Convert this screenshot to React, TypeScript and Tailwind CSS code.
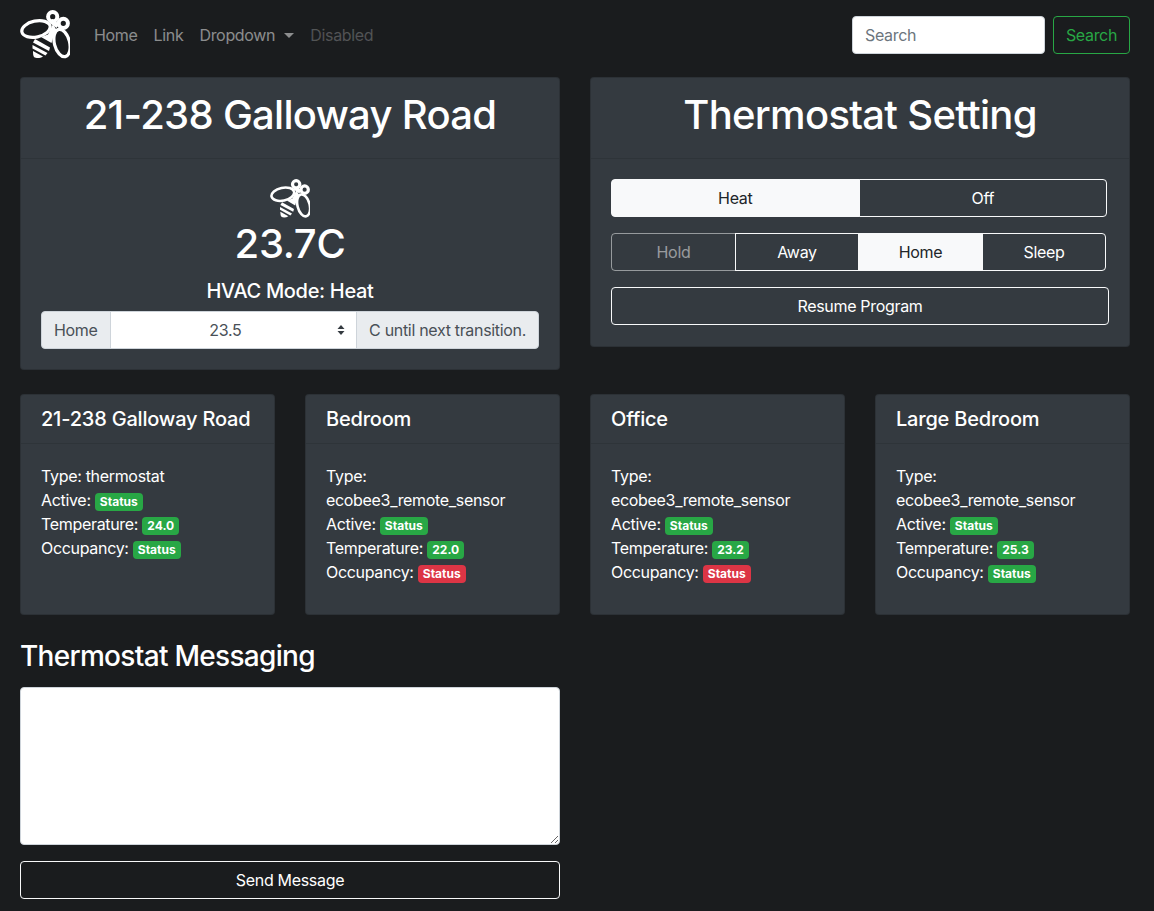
import React from "react";

function Bee({ className }: { className: string }) {
  return (
    <svg viewBox="0 0 50 50" className={className} fill="none" stroke="currentColor">
      <circle cx="32.7" cy="6.7" r="4.6" strokeWidth="4" />
      <circle cx="43.3" cy="13.3" r="4.6" strokeWidth="4" />
      <path d="M31 11 L38 16" strokeWidth="5" />
      <ellipse cx="16" cy="19" rx="14.4" ry="8" strokeWidth="3.2" transform="rotate(-12 16 19)" />
      <ellipse cx="42" cy="33" rx="7.6" ry="14" strokeWidth="3.2" transform="rotate(-14 42 33)" />
      <path d="M21 27 L28 24.5 L33 14 L36.5 20 L33.5 26 L31.5 33 Z" fill="currentColor" stroke="none" />
      <path d="M15 29 L30 37.5 L29 41 L13 32.5 Z" fill="currentColor" stroke="none" />
      <path d="M12.5 35 L27.5 43 L25.5 45.5 L12.5 38.5 Z" fill="currentColor" stroke="none" />
      <path d="M13 41 L23 46.5 C20 48.5 16 48.5 14 47 C13 45.5 13 43 13 41 Z" fill="currentColor" stroke="none" />
    </svg>
  );
}

function Badge({ children, red }: { children: React.ReactNode; red?: boolean }) {
  return (
    <span className={`inline-block rounded-[4px] px-[5px] py-[3px] align-baseline text-[12px] leading-[12px] font-bold tracking-normal text-white ${red ? "bg-[#dc3545]" : "bg-[#28a745]"}`}>
      {children}
    </span>
  );
}

function Sensor({ name, type, temp, active, occ, wrap }: { name: string; type: string; temp: string; active: boolean; occ: boolean; wrap?: boolean }) {
  return (
    <div className="rounded-[4px] border border-black/15 bg-[#343a40]">
      <div className="border-b border-black/10 px-5 py-3 text-[20px] leading-6 font-medium tracking-[-0.01em]">{name}</div>
      <div className="px-5 pt-5 pb-[30px] text-[16px] leading-6">
        <div>Type: {wrap ? <br /> : null}{type}</div>
        <div>Active: <Badge red={!active}>Status</Badge></div>
        <div>Temperature: <Badge>{temp}</Badge></div>
        <div>Occupancy: <Badge red={!occ}>Status</Badge></div>
      </div>
    </div>
  );
}

const seg = "flex h-[38px] items-center justify-center text-[16px]";

export default function App() {
  return (
    <div className="min-h-[911px] bg-[#1a1c1e] pr-6 pl-5 font-['Inter','Liberation_Sans',sans-serif] tracking-[-0.02em] text-white">
      <nav className="flex h-[77px] items-center pb-[7px]">
        <Bee className="h-[50px] w-[50px] text-white" />
        <div className="ml-6 flex items-center gap-4 text-[16px] text-white/50">
          <a>Home</a>
          <a>Link</a>
          <a className="flex items-center">
            Dropdown
            <span className="ml-[9px] border-x-[5px] border-t-[5px] border-x-transparent border-t-white/50" />
          </a>
          <a className="text-white/25">Disabled</a>
        </div>
        <div className="ml-auto flex gap-2">
          <input
            placeholder="Search"
            className="h-[38px] w-[193px] rounded-[4px] border border-[#ced4da] bg-white px-3 text-[16px] text-[#495057] outline-none placeholder:text-[#6c757d]"
          />
          <button className="h-[38px] w-[77px] rounded-[4px] border border-[#28a745] text-[16px] text-[#28a745]">Search</button>
        </div>
      </nav>

      <div className="grid grid-cols-2 items-start gap-x-[30px]">
        <div className="rounded-[4px] border border-black/15 bg-[#343a40]">
          <div className="border-b border-black/10 pt-[13px] pb-[19px] text-center text-[40px] leading-[48px] font-medium tracking-[-0.0175em]">21-238 Galloway Road</div>
          <div className="flex flex-col items-center p-5">
            <Bee className="h-[40px] w-[40px] text-white" />
            <div className="mt-[1px] text-[40px] leading-[48px] font-medium">23.7C</div>
            <div className="mt-[11px] text-[20px] leading-6 font-medium">HVAC Mode: Heat</div>
            <div className="mt-2 flex h-[38px] w-full text-[16px] text-[#495057]">
              <span className="flex items-center rounded-l-[4px] border border-[#ced4da] bg-[#e9ecef] px-3">Home</span>
              <div className="relative -mx-px flex-1">
                <select className="h-full w-full appearance-none border border-[#ced4da] bg-white pr-7 pl-3 [text-align-last:center]">
                  <option>23.5</option>
                </select>
                <svg viewBox="0 0 8 10" className="pointer-events-none absolute top-[14px] right-[12px] h-[10px] w-[8px] fill-[#343a40]">
                  <path d="M4 0 L7.5 4 H0.5 Z M4 10 L7.5 6 H0.5 Z" />
                </svg>
              </div>
              <span className="flex items-center rounded-r-[4px] border border-[#ced4da] bg-[#e9ecef] px-3">C until next transition.</span>
            </div>
          </div>
        </div>

        <div className="rounded-[4px] border border-black/15 bg-[#343a40]">
          <div className="border-b border-black/10 pt-[13px] pb-[19px] text-center text-[40px] leading-[48px] font-medium tracking-[-0.0175em]">Thermostat Setting</div>
          <div className="flex flex-col gap-4 px-5 pt-5 pb-[21px]">
            <div className="flex w-[497px]">
              <button className={`${seg} w-1/2 rounded-l-[4px] border border-[#f8f9fa] bg-[#f8f9fa] text-[#212529]`}>Heat</button>
              <button className={`${seg} -ml-px w-1/2 rounded-r-[4px] border border-[#f8f9fa]`}>Off</button>
            </div>
            <div className="flex w-[495px]">
              <button className={`${seg} w-[125px] rounded-l-[4px] border border-[#f8f9fa]/50 text-white/50`}>Hold</button>
              <button className={`${seg} -ml-px w-[124px] border border-[#f8f9fa]`}>Away</button>
              <button className={`${seg} -ml-px w-[125px] border border-[#f8f9fa] bg-[#f8f9fa] text-[#212529]`}>Home</button>
              <button className={`${seg} -ml-px flex-1 rounded-r-[4px] border border-[#f8f9fa]`}>Sleep</button>
            </div>
            <button className={`${seg} w-full rounded-[4px] border border-[#f8f9fa]`}>Resume Program</button>
          </div>
        </div>
      </div>

      <div className="mt-6 grid grid-cols-4 gap-x-[30px]">
        <Sensor name="21-238 Galloway Road" type="thermostat" temp="24.0" active occ />
        <Sensor name="Bedroom" type="ecobee3_remote_sensor" temp="22.0" active occ={false} wrap />
        <Sensor name="Office" type="ecobee3_remote_sensor" temp="23.2" active occ={false} wrap />
        <Sensor name="Large Bedroom" type="ecobee3_remote_sensor" temp="25.3" active occ wrap />
      </div>

      <div className="mt-6 grid grid-cols-2 gap-x-[30px]">
        <div>
          <div className="text-[28px] leading-[34px] font-medium tracking-[-0.025em]">Thermostat Messaging</div>
          <textarea className="mt-[14px] block h-[158px] w-full rounded-[4px] border border-[#ced4da] bg-white outline-none" />
          <button className={`${seg} mt-4 w-full rounded-[4px] border border-[#f8f9fa]`}>Send Message</button>
        </div>
      </div>
    </div>
  );
}
